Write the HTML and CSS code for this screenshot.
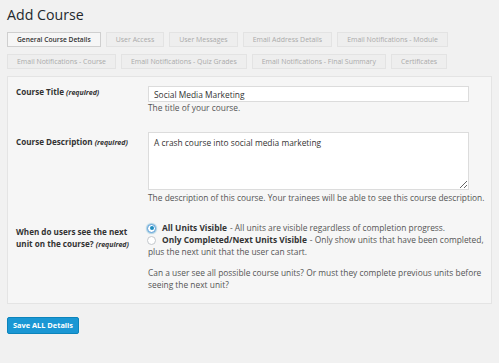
FILE: index.html
```html
<!DOCTYPE html>
<html>
<head>
<meta charset="utf-8">
<link rel="stylesheet" href="styles.css">
</head>
<body>
<h1 class="page-title">Add Course</h1>
<div class="tabs">
  <span class="tab tab-active">General Course Details</span>
  <span class="tab">User Access</span>
  <span class="tab">User Messages</span>
  <span class="tab">Email Address Details</span>
  <span class="tab">Email Notifications - Module</span>
  <span class="tab">Email Notifications - Course</span>
  <span class="tab">Email Notifications - Quiz Grades</span>
  <span class="tab">Email Notifications - Final Summary</span>
  <span class="tab">Certificates</span>
</div>
<div class="panel">
  <div class="form-row row-title">
    <div class="label label-first">Course Title <em>(required)</em></div>
    <div class="field">
      <input class="text-input" type="text" value="Social Media Marketing">
      <div class="hint">The title of your course.</div>
    </div>
  </div>
  <div class="form-row row-desc">
    <div class="label">Course Description <em>(required)</em></div>
    <div class="field">
      <textarea class="text-area">A crash course into social media marketing</textarea>
      <div class="hint hint-desc">The description of this course. Your trainees will be able to see this course description.</div>
    </div>
  </div>
  <div class="form-row row-units">
    <div class="label">When do users see the next<br>unit on the course? <em>(required)</em></div>
    <div class="field">
      <div class="radio-line"><span class="radio radio-checked"></span><b>All Units Visible</b> - All units are visible regardless of completion progress.</div>
      <div class="radio-line"><span class="radio"></span><b>Only Completed/Next Units Visible</b> - Only show units that have been completed,</div>
      <div class="radio-wrap">plus the next unit that the user can start.</div>
      <div class="units-note">Can a user see all possible course units? Or must they complete previous units before<br>seeing the next unit?</div>
    </div>
  </div>
</div>
<button class="save-btn">Save ALL Details</button>
</body>
</html>
```
FILE: styles.css
```css
html, body {
  margin: 0;
  padding: 0;
  background: #f1f1f1;
}
body {
  padding: 5px 7px 0 7px;
  font-family: "Open Sans", "DejaVu Sans", sans-serif;
  font-size: 8.4px;
  color: #444;
}
.page-title {
  margin: 0;
  font-size: 14.2px;
  line-height: 20px;
  font-weight: 400;
  color: #23282d;
}
.tabs {
  margin-top: 7px;
  display: flex;
  flex-wrap: wrap;
  column-gap: 5px;
  row-gap: 7px;
}
.tab {
  display: inline-block;
  height: 15px;
  box-sizing: border-box;
  padding: 0 9px;
  border: 1px solid #e3e3e3;
  background: #eeeeee;
  color: #aaaaaa;
  font-size: 6.95px;
  line-height: 13px;
  white-space: nowrap;
}
.tab-active {
  background: #f6f6f6;
  border-color: #cfcfcf;
  color: #333;
  font-weight: 600;
  font-size: 6.7px;
}
.panel {
  margin-top: 7px;
  width: 485px;
  box-sizing: border-box;
  border: 1px solid #e4e4e4;
  background: #f6f6f6;
  padding: 9px 2px 12px 8px;
}
.form-row {
  display: grid;
  grid-template-columns: 132px 1fr;
}
.row-desc { margin-top: 19px; }
.row-units { margin-top: 19px; }
.label {
  font-weight: 700;
  color: #333;
  font-size: 8.1px;
  line-height: 12px;
  padding-top: 4px;
}
.label em {
  font-weight: 700;
  font-style: italic;
  font-size: 7px;
}
.label-first {
  padding-top: 0;
  line-height: 11px;
}
.text-input {
  display: block;
  box-sizing: border-box;
  width: 321px;
  height: 16px;
  margin: 0;
  padding: 0 5px;
  border: 1px solid #dcdcdc;
  background: #fff;
  font-family: "Open Sans", "DejaVu Sans", sans-serif;
  font-size: 8.4px;
  color: #333;
  outline: none;
}
.text-area {
  display: block;
  box-sizing: border-box;
  width: 321px;
  height: 58px;
  margin: 0;
  padding: 4px 5px;
  border: 1px solid #dcdcdc;
  background: #fff;
  font-family: "Open Sans", "DejaVu Sans", sans-serif;
  font-size: 8.4px;
  line-height: 11px;
  color: #333;
  outline: none;
}
.hint {
  line-height: 11px;
  color: #555;
  white-space: nowrap;
}
.hint-desc { margin-top: 2px; }
.radio-line {
  display: flex;
  align-items: center;
  line-height: 12px;
  white-space: nowrap;
  color: #555;
}
.radio-line b {
  color: #333;
  font-weight: 700;
  margin-right: 3px;
}
.radio {
  width: 9px;
  height: 9px;
  box-sizing: border-box;
  border: 1px solid #c3c7cc;
  border-radius: 50%;
  background: #fff;
  margin: 0 6px 0 -1px;
  display: flex;
  align-items: center;
  justify-content: center;
  flex: none;
}
.radio-checked {
  border-color: #5b9dd9;
  box-shadow: 0 0 1px 1px rgba(30, 140, 190, 0.35);
}
.radio-checked::after {
  content: "";
  width: 4px;
  height: 4px;
  border-radius: 50%;
  background: #1e8cbe;
}
.radio-wrap {
  line-height: 12px;
  color: #555;
  white-space: nowrap;
}
.units-note {
  margin-top: 9px;
  line-height: 12px;
  color: #555;
  white-space: nowrap;
}
.save-btn {
  display: block;
  margin-top: 13px;
  height: 17px;
  width: 72px;
  padding: 0;
  border: 1px solid #0c84bb;
  border-radius: 2px;
  background: #1a97d4;
  color: #fff;
  font-family: "Open Sans", "DejaVu Sans", sans-serif;
  font-size: 7.4px;
  font-weight: 700;
  line-height: 15px;
  cursor: pointer;
}
```
